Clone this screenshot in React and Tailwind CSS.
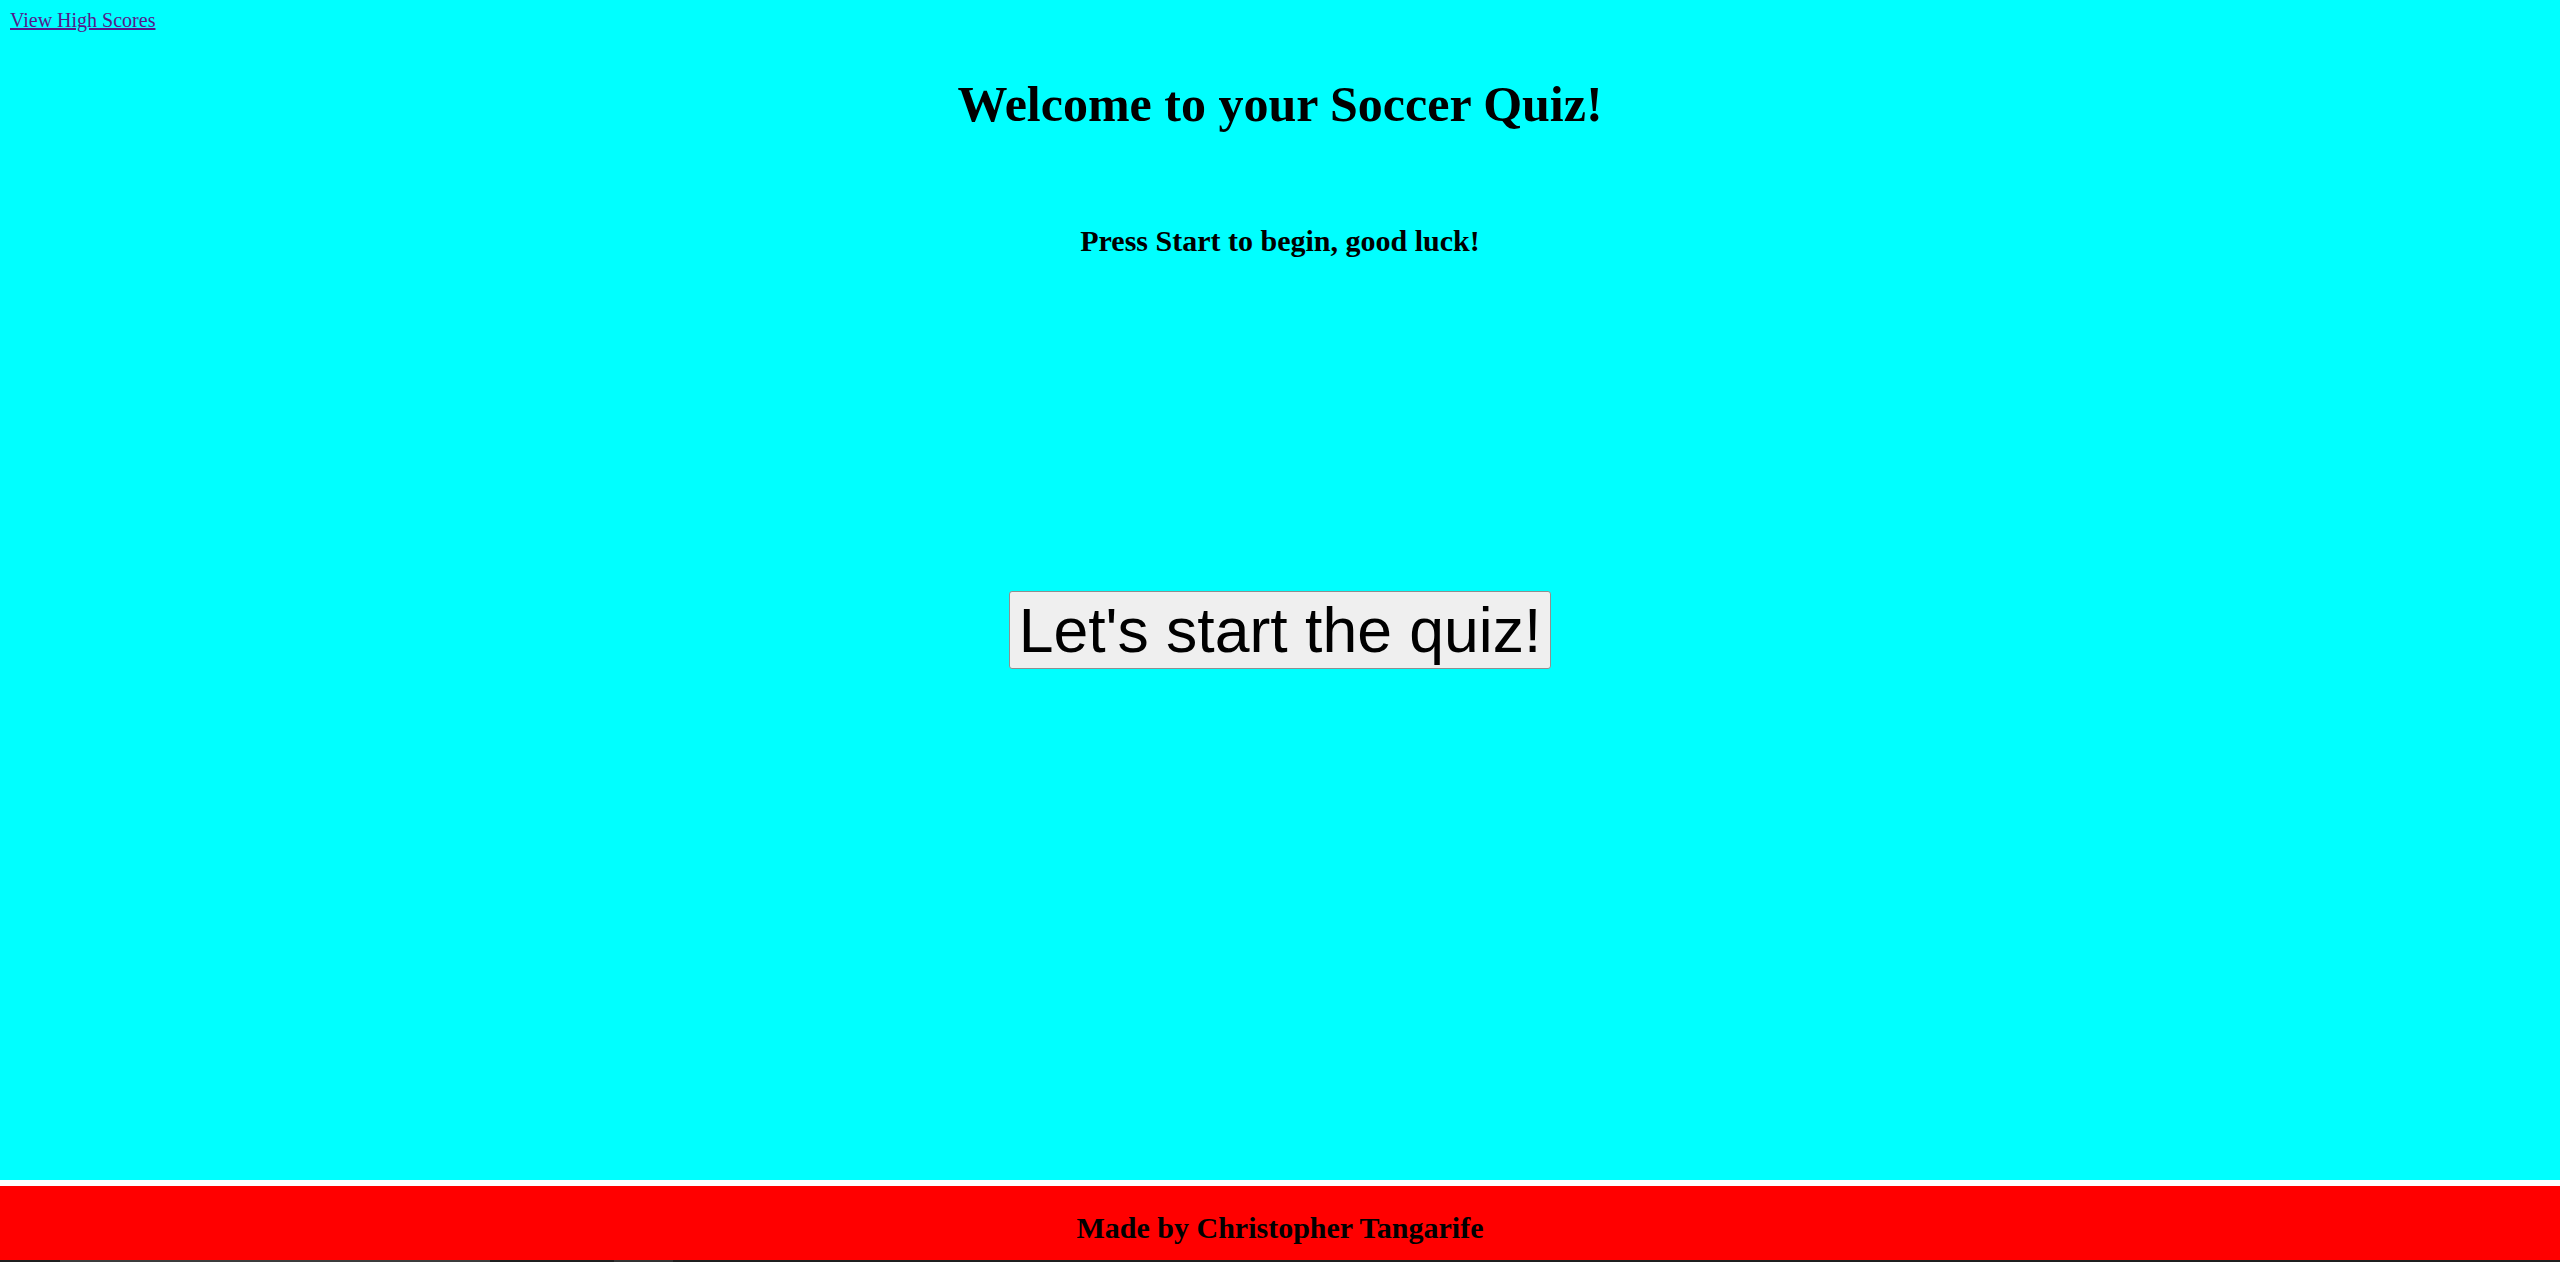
export default function App() {
  return (
    <div className="flex h-screen flex-col bg-white font-['Liberation_Serif',serif] text-black">
      <main className="flex flex-1 flex-col bg-[#00ffff]">
        <div className="pl-[10px] pt-[9px]">
          <a href="#" className="text-[20px] leading-[22px] text-[#551a8b] underline">
            View High Scores
          </a>
        </div>
        <h1 className="mt-[42px] text-center text-[50px] font-bold leading-[56px]">
          Welcome to your Soccer Quiz!
        </h1>
        <h3 className="mt-[92px] text-center text-[30px] font-bold leading-[34px]">
          Press Start to begin, good luck!
        </h3>
        <div className="mt-[333px] flex justify-center">
          <button className="flex h-[78px] w-[542px] items-center justify-center rounded-[3px] border border-[#8f8f8f] bg-[#efefef] font-['Liberation_Sans',Arial,sans-serif] text-[62.5px] leading-none text-black">
            Let's start the quiz!
          </button>
        </div>
      </main>
      <div className="h-[6px] bg-white" />
      <footer className="flex h-[74px] items-start justify-center bg-[#ff0000] pt-[25px]">
        <h3 className="text-[30px] font-bold leading-[34px]">Made by Christopher Tangarife</h3>
      </footer>
      <div className="flex h-[2px] bg-[#1f1f1f]">
        <div className="ml-[60px] w-[430px] bg-[#3c3c3c]" />
        <div className="ml-[124px] w-[59px] bg-[#333333]" />
      </div>
    </div>
  );
}
